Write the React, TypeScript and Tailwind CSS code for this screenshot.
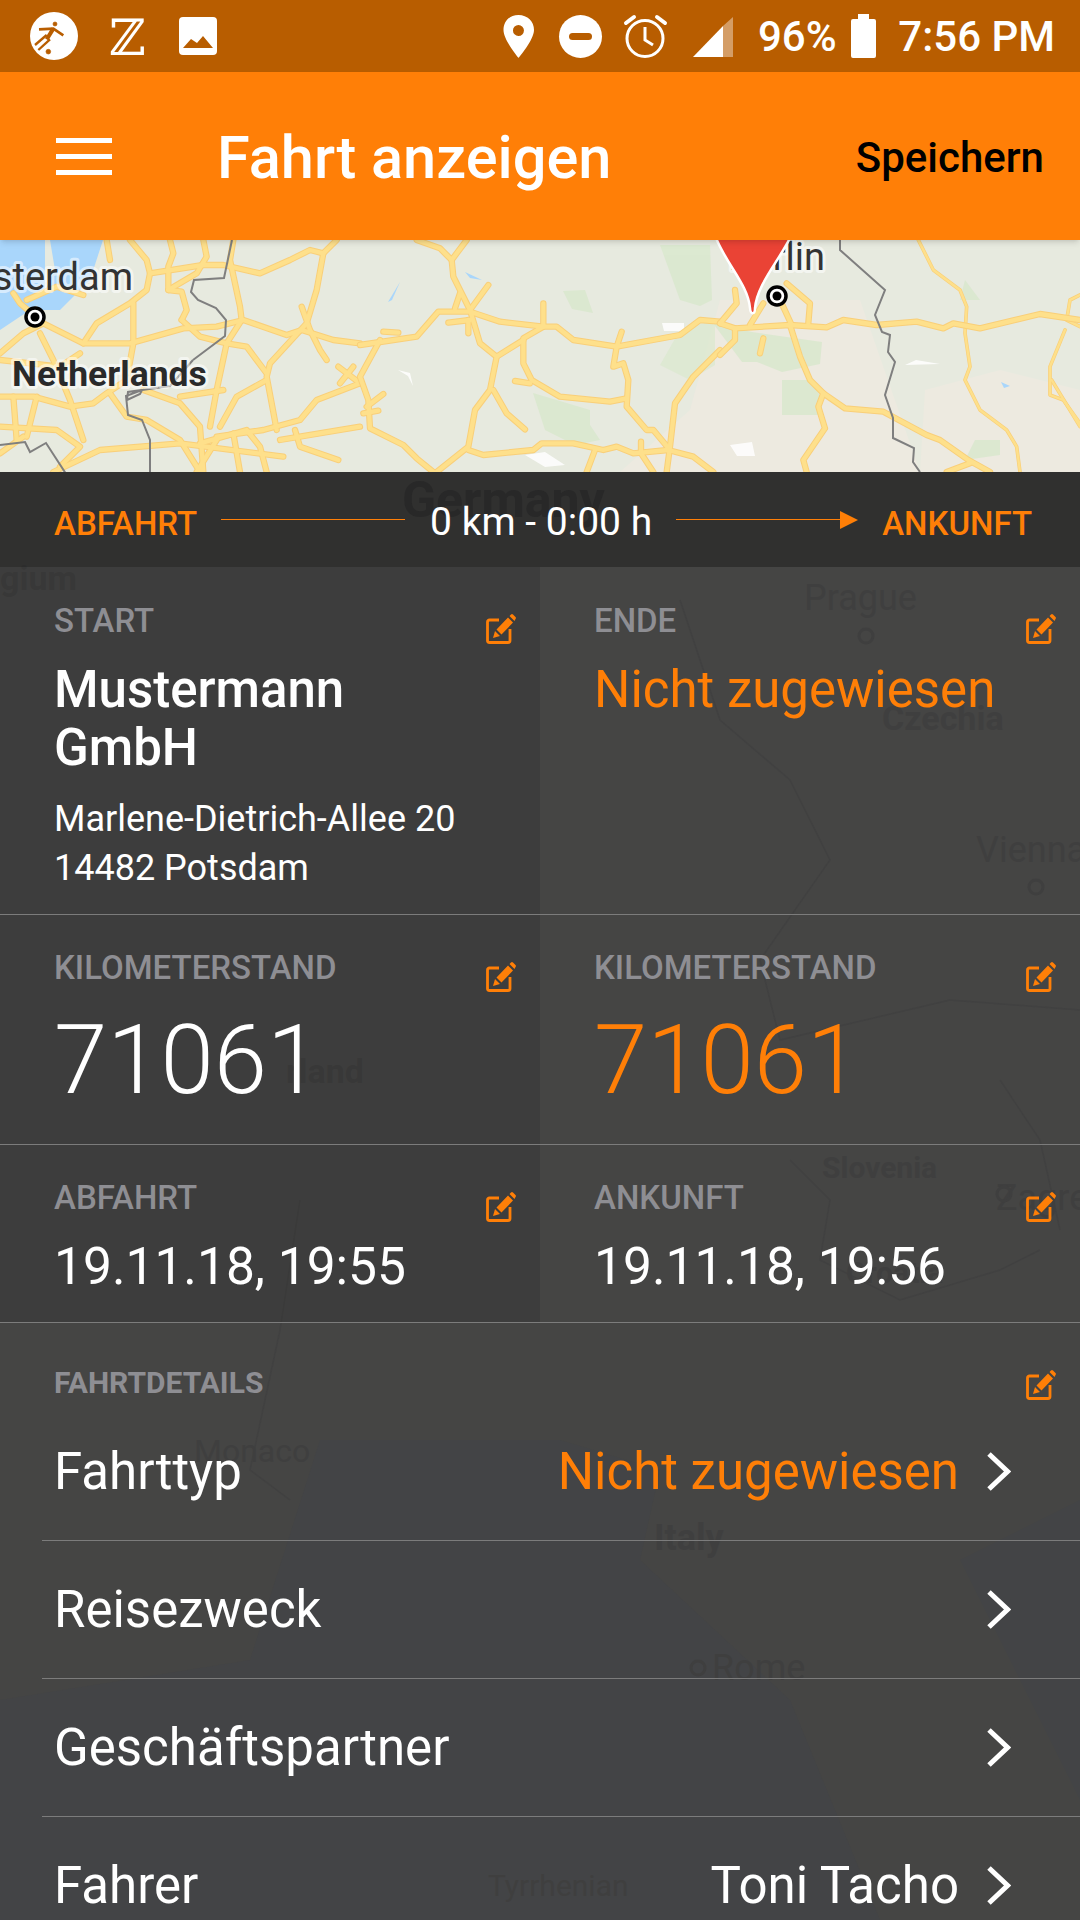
import React from 'react';

const ROADS_LEFT = [
  '390,0 440,60 450,100 440,150 390,190 290,250 250,310',
  '450,100 610,75 670,75 780,100 870,60 930,30 970,40 1010,0',
  '970,40 950,150 920,250 810,370 800,410 830,570',
  '510,0 520,40 505,80 505,150 545,155 560,210 545,240',
  '610,0 620,50 590,100 505,150',
  '700,0 690,60 720,200 725,240',
  '320,0 330,60',
  '130,250 250,310 390,310 550,265 650,260 730,240 860,285 905,270 1000,300 1080,310',
  '545,240 600,290 680,310 740,320 800,400',
  '725,240 680,310 650,450 630,560',
  '400,190 400,310 380,420',
  '905,200 930,270 960,330 980,360',
  '1015,380 1080,430',
  '1060,380 1020,430',
  '800,420 710,470 660,560',
  '1080,430 950,480 900,540 790,570 650,590',
  '840,600 1080,560',
  '885,570 900,620 1015,660',
  '0,560 170,570 240,620 180,680',
  '0,470 100,470 210,500 280,490 320,460 380,420',
  '120,280 160,360 210,480 250,600',
  '330,460 380,530 440,540 540,600 600,696',
  '430,450 540,490 600,560 610,696',
  '160,696 300,630 540,610 850,650',
  '600,610 740,570 780,620 800,696',
  '0,340 70,280 130,250 60,190 40,160',
  '80,180 170,140 250,165',
  '0,360 180,380 240,340',
  '40,470 50,600',
  '110,470 80,590',
  '0,640 70,590',
  '540,470 670,450',
  '650,600 590,696',
  '700,580 720,696',
];

const ROADS_MID = [
  '170,0 240,25 275,60 320,0',
  '275,60 280,110 330,210 360,310 410,350 390,450 345,510 325,620 230,696',
  '0,315 170,290 235,215 330,215 420,245 550,260 590,260 640,300 770,320 960,285 1020,240 1080,245',
  '60,300 0,410 25,480 30,565 130,615 170,655 220,696',
  '330,210 385,135',
  '300,160 285,205',
  '265,248 330,240',
  '325,240 325,280',
  '550,190 550,260 490,295 490,370 515,420 600,470 750,485 800,475',
  '410,350 490,300',
  '70,275 115,278',
  '465,423 510,430',
  '400,450 440,520 495,568',
  '20,500 70,462',
  '10,520 55,512',
  '325,630 370,645 520,630 545,610 640,610 730,630 770,620 820,640 925,630 1000,650 1060,696',
  '785,275 770,320 760,380 790,370 805,420 800,500 860,570 880,570 930,630',
  '843,605 843,640 880,696',
  '1080,330 1000,410 945,490 930,620 920,696',
  '705,630 680,696',
];

const ROADS_RIGHT = [
  '0,250 45,265 210,255 320,262 370,240 470,255 590,245 670,265 700,250 780,265 960,222 1080,240',
  '45,265 45,300 0,345',
  '0,250 50,190 45,150',
  '210,255 240,350 270,420 310,460 375,505 490,515 620,585 660,600 745,660 810,696',
  '310,460 295,500 315,565 250,660 260,696',
  '200,130 270,190 265,250',
  '185,190 215,255',
  '90,255 130,190',
  '130,295 120,340',
  '680,696 750,670',
];

const ROADS_THIN = [
  '595,0 640,90 720,150 740,200 735,280 750,380 735,420 780,510 860,570 890,620 900,696',
  '1080,260 1040,240 1050,180 1080,165',
  '1035,270 990,380 990,465 1030,480 1080,550',
  '995,420 1080,560',
];

function Roads({ list, thin = false }: { list: string[]; thin?: boolean }) {
  return (
    <g fill="none" strokeLinecap="round" strokeLinejoin="round">
      {list.map((p, i) => (
        <polyline key={'c' + i} points={p} stroke="#f9cf79" strokeWidth={thin ? 11 : 19} />
      ))}
      {list.map((p, i) => (
        <polyline key={'f' + i} points={p} stroke="#fee08b" strokeWidth={thin ? 7 : 13} />
      ))}
    </g>
  );
}

function CityDot({ x, y }: { x: number; y: number }) {
  return (
    <g>
      <circle cx={x} cy={y} r={9} fill="#fff" stroke="#000" strokeWidth={3.5} />
      <circle cx={x} cy={y} r={4.5} fill="#000" />
    </g>
  );
}

function MapView() {
  const label = { paintOrder: 'stroke', stroke: 'rgba(255,255,255,0.55)', strokeWidth: 6, strokeLinejoin: 'round' } as const;
  return (
    <svg viewBox="0 0 1080 232" className="block h-[232px] w-[1080px]">
      <rect width="1080" height="232" fill="#e7eadf" />
      {/* farmland to the east */}
      <polygon points="620,232 690,170 720,60 860,60 920,232" fill="#edeae0" />
      <polygon points="920,232 925,150 1000,130 1080,150 1080,232" fill="#edeae0" />
      {/* water */}
      <polygon points="0,0 45,0 45,60 0,90" fill="#a9d6fb" />
      <polygon points="50,0 103,0 90,40 60,70 35,70 55,30" fill="#a9d6fb" />
      {/* forest */}
      <g fill="#d9e8cd" opacity=".8">
        <polygon points="563,51 585,50 593,73 572,69" />
        <polygon points="533,153 590,170 590,185 600,200 575,205 545,190" />
        <polygon points="660,5 710,5 712,60 700,66 680,60" />
        <polygon points="712,82 752,92 822,102 820,124 782,132 757,122 742,122" />
        <polygon points="680,90 715,80 715,125 690,140 660,125" opacity=".8" />
        <polygon points="782,140 812,140 822,160 822,175 782,175" />
        <polygon points="965,40 980,60 960,60" />
        <polygon points="975,200 1000,200 1000,215 965,220" />
      </g>
      {/* small lakes and clearings */}
      <g fill="#fff" opacity=".85">
        <polygon points="398,130 410,133 413,146 408,136" />
        <polygon points="662,83 684,83 684,91 664,91" />
        <polygon points="525,215 545,212 565,225 545,227" />
        <polygon points="730,205 752,202 755,216 737,216" />
        <polygon points="916,120 940,124 905,125" />
      </g>
      <g fill="#a9d6fb">
        <polygon points="465,32 482,40 470,38" />
        <polygon points="388,62 400,42 392,60" />
        <polygon points="1001,142 1010,146 1004,148" />
      </g>
      <g transform="scale(0.33333)">
        <Roads list={ROADS_LEFT} />
      </g>
      <g transform="translate(360,0) scale(0.33333)">
        <Roads list={ROADS_MID} />
      </g>
      <g transform="translate(720,0) scale(0.33333)">
        <Roads list={ROADS_THIN} thin />
        <Roads list={ROADS_RIGHT} />
      </g>
      {/* borders */}
      <g fill="none" stroke="#7f7f7f" strokeWidth="2">
        <polyline points="232,0 224,38 194,40 191,52 198,60 216,68 226,80 225,96 193,120" />
        <polyline points="193,120 170,146 128,152 127,160 140,154 142,150 126,156 128,175 142,180 150,200 150,232" />
        <polyline points="0,205 25,202 30,212 46,203 70,240" />
        <polyline points="840,0 840,10 885,50 875,75 882,92 890,95 888,112 895,122 885,155 893,178 893,198 914,208 913,222 920,232" />
      </g>
      <text x="133" y="50" textAnchor="end" fontSize="38" fill="#333" style={label}>sterdam</text>
      <text x="12" y="146" fontSize="35.5" fontWeight="700" fill="#2a2a2a" style={label}>Netherlands</text>
      <text x="825" y="30" textAnchor="end" fontSize="38" fill="#333" style={label}>Berlin</text>
      <CityDot x={35} y={77} />
      <CityDot x={777} y={56} />
      {/* marker */}
      <path d="M716 -2 C727 25 748 45 750 68 C750.5 75 755 75 755 68 C757 45 778 22 790 -2 Z" fill="#ea4335" stroke="#fff" strokeWidth="2.5" />
    </svg>
  );
}

function Backdrop() {
  const ghost = 'fill-[#3f3f3f]';
  return (
    <svg viewBox="0 472 1080 1448" className="absolute inset-0 h-[1448px] w-[1080px]">
      <polygon points="0,472 1080,472 1080,1500 960,1560 1080,1800 1080,1920 880,1920 790,1700 640,1560 660,1470 560,1440 320,1440 250,1660 0,1700" fill="#454544" />
      <g fill="none" stroke="#414141" strokeWidth="1.5">
        <polyline points="680,600 720,720 790,780 830,860 760,960 780,1040 950,1000 1080,1010" />
        <polyline points="790,1160 830,1200 820,1260 900,1300 1000,1270 1040,1250" />
        <polyline points="300,1200 280,1330 250,1470 290,1500" />
        <polyline points="1000,1080 1040,1140 1060,1230" />
      </g>
      <g fontWeight="700" className={ghost}>
        <text x="402" y="517" fontSize="50" className="fill-[#3a3a3a]">Germany</text>
        <text x="0" y="590" fontSize="34">gium</text>
        <text x="804" y="610" fontSize="36" fontWeight="400">Prague</text>
        <text x="882" y="730" fontSize="34">Czechia</text>
        <text x="976" y="862" fontSize="36" fontWeight="400">Vienna</text>
        <text x="286" y="1083" fontSize="34">rland</text>
        <text x="822" y="1178" fontSize="30">Slovenia</text>
        <text x="846" y="1283" fontSize="30">Croatia</text>
        <text x="996" y="1210" fontSize="36" fontWeight="400">Zagreb</text>
        <text x="194" y="1462" fontSize="32" fontWeight="400">Monaco</text>
        <text x="654" y="1550" fontSize="36">Italy</text>
        <text x="712" y="1680" fontSize="36" fontWeight="400">Rome</text>
        <text x="488" y="1896" fontSize="30" fontWeight="400">Tyrrhenian</text>
      </g>
      <g fill="none" stroke="#3f3f3f" strokeWidth="3">
        <circle cx="866" cy="636" r="7" />
        <circle cx="1036" cy="887" r="7" />
        <circle cx="1004" cy="1194" r="7" />
        <circle cx="698" cy="1668" r="7" />
      </g>
    </svg>
  );
}

function EditIcon() {
  return (
    <svg viewBox="0 0 30 30" className="mt-[47px] h-[30px] w-[30px] shrink-0 text-[#ff7f07]">
      <path d="M13 6H3.5A2 2 0 0 0 1.5 8V26.5A2 2 0 0 0 3.5 28.5H22A2 2 0 0 0 24 26.5V15" fill="none" stroke="currentColor" strokeWidth="2.8" />
      <path d="M7 24 L9 17 L14 22 Z M10.5 15.5 L22 3.5 L27 8.5 L15.5 20.5 Z M23.5 2 L25 .5 A1.5 1.5 0 0 1 27 .5 L29.5 3 A1.5 1.5 0 0 1 29.5 5 L28.5 7 Z" fill="currentColor" />
    </svg>
  );
}

function Cell({
  label,
  dark,
  first,
  children,
}: {
  label: string;
  dark?: boolean;
  first?: boolean;
  children: React.ReactNode;
}) {
  return (
    <div className={`flex justify-between pl-[54px] pr-[24px] ${dark ? 'bg-black/10' : ''}`}>
      <div className={first ? 'pt-[34px]' : 'pt-[33px]'}>
        <div className="text-[33px] leading-[39px] font-medium text-[#8e8e93]">{label}</div>
        {children}
      </div>
      <EditIcon />
    </div>
  );
}

function ListRow({ label, value, accent }: { label: string; value?: string; accent?: boolean }) {
  return (
    <div className="ml-[42px] flex h-[138px] items-center justify-between border-b border-[#7c7c7c] pl-[12px] pr-[69px]">
      <span className="pt-[2px] text-[51px] text-white">{label}</span>
      <span className="flex items-center gap-[27px]">
        {value && <span className={`pt-[2px] text-[51px] ${accent ? 'text-[#ff7f07]' : 'text-white'}`}>{value}</span>}
        <svg viewBox="0 0 25 39" className="h-[39px] w-[25px]">
          <polyline points="3,2 21.5,19.5 3,37" fill="none" stroke="#fff" strokeWidth="5" />
        </svg>
      </span>
    </div>
  );
}

function StatusIcons() {
  return (
    <>
      <svg viewBox="0 0 240 72" className="absolute left-0 top-0 h-[72px] w-[240px]">
        <circle cx="54" cy="36" r="24" fill="#fff" />
        <g transform="scale(0.33333)" stroke="#b85d00" fill="none" strokeWidth="7">
          <circle cx="165" cy="72" r="6" fill="#b85d00" strokeWidth="2" />
          <polyline points="117,88 160,86 190,106" strokeWidth="8" />
          <polyline points="160,86 140,118" strokeWidth="12" />
          <line x1="105" y1="135" x2="140" y2="105" />
          <line x1="115" y1="150" x2="150" y2="118" />
          <circle cx="145" cy="155" r="7" fill="#b85d00" strokeWidth="2" />
        </g>
        <text x="109" y="55" fontSize="50" fill="#fff" fontFamily="'DejaVu Serif', serif">ℤ</text>
        <rect x="179" y="17" width="38" height="38" rx="4" fill="#fff" />
        <polygon points="183,48 191,39 197,43 203,36 213,48" fill="#b85d00" />
      </svg>
      <svg viewBox="440 0 300 72" className="absolute left-[440px] top-0 h-[72px] w-[300px]">
        <path d="M518.5 15 C509.5 15 503.5 21.5 503.5 30 C503.5 40 518.5 58 518.5 58 C518.5 58 534 40 534 30 C534 21.5 527.5 15 518.5 15 Z M518.5 25 A5.5 5.5 0 1 1 518.4 36 A5.5 5.5 0 0 1 518.5 25 Z" fill="#fff" fillRule="evenodd" />
        <circle cx="580.5" cy="36.5" r="21.5" fill="#fff" />
        <rect x="569" y="33" width="23" height="7" rx="3.5" fill="#b85d00" />
        <circle cx="645" cy="38.5" r="18" fill="none" stroke="#fff" strokeWidth="3" />
        <polyline points="645,27 645,40 653,45" fill="none" stroke="#fff" strokeWidth="3" />
        <line x1="626" y1="23" x2="634" y2="17" stroke="#fff" strokeWidth="4" strokeLinecap="round" />
        <line x1="665" y1="23" x2="657" y2="17" stroke="#fff" strokeWidth="4" strokeLinecap="round" />
        <polygon points="693,57 723,26 723,57" fill="#fff" />
        <polygon points="723,26 733,17 733,57 723,57" fill="#fff" opacity=".4" />
      </svg>
      <svg viewBox="0 0 25 44" className="absolute left-[851px] top-[14px] h-[44px] w-[25px]">
        <path d="M7 0H18V5H23A2 2 0 0 1 25 7V42A2 2 0 0 1 23 44H2A2 2 0 0 1 0 42V7A2 2 0 0 1 2 5H7Z" fill="#fff" />
      </svg>
    </>
  );
}

export default function App() {
  return (
    <div className="h-[1920px] w-[1080px] overflow-hidden bg-[#434446] font-['Roboto',sans-serif]">
      {/* status bar */}
      <div className="relative h-[72px] bg-[#b85d00] text-[42px] font-medium leading-[74px] text-white">
        <StatusIcons />
        <span className="absolute left-[758px] top-0">96%</span>
        <span className="absolute right-[25px] top-0">7:56 PM</span>
      </div>

      {/* app bar */}
      <div className="relative z-10 flex h-[168px] items-center bg-[#ff7f07] shadow-md">
        <div className="ml-[56px] flex w-[56px] flex-col gap-[11px]">
          <div className="h-[5px] bg-white" />
          <div className="h-[5px] bg-white" />
          <div className="h-[5px] bg-white" />
        </div>
        <div className="ml-[105px] mt-[5px] text-[59.5px] font-medium text-white">Fahrt anzeigen</div>
        <div className="ml-auto mr-[36px] mt-[3px] text-[42px] font-medium text-black">Speichern</div>
      </div>

      <MapView />

      <div className="relative h-[1448px]">
        <Backdrop />
        <div className="relative">
          {/* summary */}
          <div className="flex h-[95px] items-center bg-black/30 pl-[54px] pr-[48px] text-[33px] font-medium text-[#ff7f07]">
            <span className="mt-[8px]">ABFAHRT</span>
            <div className="ml-[24px] h-[1.5px] w-[184px] bg-[#ff7f07]" />
            <span className="ml-[25px] mr-[24px] mt-[6px] text-[39px] font-normal text-white">0 km - 0:00 h</span>
            <div className="h-[1.5px] w-[164px] bg-[#ff7f07]" />
            <svg viewBox="0 0 18 18" className="h-[18px] w-[18px]">
              <polygon points="0,0 18,9 0,18" fill="#ff7f07" />
            </svg>
            <span className="ml-auto mt-[8px]">ANKUNFT</span>
          </div>

          <div className="grid h-[348px] grid-cols-2 border-b border-[#7c7c7c]">
            <Cell label="START" dark first>
              <div className="mt-[21px] text-[51px] font-medium leading-[58px] text-white">
                Mustermann
                <br />
                GmbH
              </div>
              <div className="mt-[18px] text-[36px] leading-[49px] text-white">
                Marlene-Dietrich-Allee 20
                <br />
                14482 Potsdam
              </div>
            </Cell>
            <Cell label="ENDE" first>
              <div className="mt-[21px] text-[51px] leading-[58px] text-[#ff7f07]">Nicht zugewiesen</div>
            </Cell>
          </div>

          <div className="grid h-[230px] grid-cols-2 border-b border-[#7c7c7c]">
            <Cell label="KILOMETERSTAND" dark>
              <div className="mt-[17px] text-[96px] font-light leading-[112px] text-white">71061</div>
            </Cell>
            <Cell label="KILOMETERSTAND">
              <div className="mt-[17px] text-[96px] font-light leading-[112px] text-[#ff7f07]">71061</div>
            </Cell>
          </div>

          <div className="grid h-[178px] grid-cols-2 border-b border-[#7c7c7c]">
            <Cell label="ABFAHRT" dark>
              <div className="mt-[21px] text-[51.5px] leading-[58px] text-white">19.11.18, 19:55</div>
            </Cell>
            <Cell label="ANKUNFT">
              <div className="mt-[21px] text-[51.5px] leading-[58px] text-white">19.11.18, 19:56</div>
            </Cell>
          </div>

          <div className="flex h-[80px] justify-between pl-[54px] pr-[24px]">
            <div className="pt-[43px] text-[30px] font-bold leading-[33px] text-[#8e8e93]">FAHRTDETAILS</div>
            <EditIcon />
          </div>

          <ListRow label="Fahrttyp" value="Nicht zugewiesen" accent />
          <ListRow label="Reisezweck" />
          <ListRow label="Geschäftspartner" />
          <ListRow label="Fahrer" value="Toni Tacho" />
        </div>
      </div>
    </div>
  );
}
